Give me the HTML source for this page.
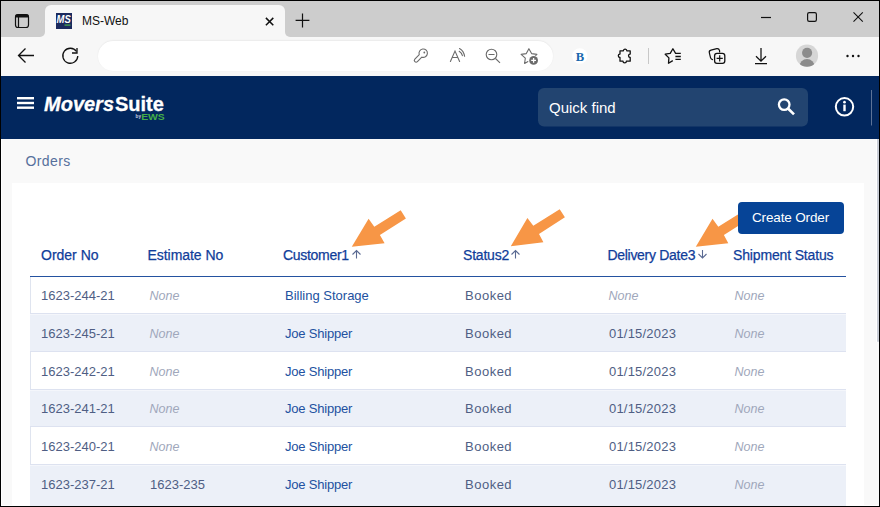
<!DOCTYPE html>
<html><head><meta charset="utf-8">
<style>
*{box-sizing:border-box;margin:0;padding:0}
html,body{width:880px;height:507px;overflow:hidden;background:#000}
body{position:relative;font-family:"Liberation Sans",sans-serif}
.a{position:absolute;white-space:nowrap}
svg{position:absolute;overflow:visible}
.th{position:absolute;top:246.5px;font-size:14px;color:#103d9a;line-height:16px;-webkit-text-stroke:0.25px #103d9a}
.row{position:absolute;left:30px;width:816px;height:37.8px}
.sep{position:absolute;left:30px;width:816px;height:1px;background:#dde2f0}.lt{position:absolute;left:30px;width:816px;height:1px;background:#f4f6fb}.band{position:absolute;left:30px;width:816px;background:#ecf0f8}
.c{position:absolute;top:11px;font-size:13px;line-height:16px;color:#4f5e84}
.n{font-style:italic;color:#a0a7bb;font-size:12.5px;margin-left:-0.5px}
.l{color:#2251a0}
</style></head><body>
<div class="a" style="left:1px;top:1px;width:878px;height:505px;background:#f9f9f9;overflow:hidden">
  <!-- tab strip -->
  <div class="a" style="left:0;top:0;width:878px;height:40px;background:#f7f7f7"></div>
  <div class="a" style="left:0;top:0;width:44px;height:36px;background:#cdcdcd;border-bottom-right-radius:5px"></div>
  <div class="a" style="left:284px;top:0;width:594px;height:36px;background:#cdcdcd;border-bottom-left-radius:5px"></div>
  <div class="a" style="left:40px;top:0;width:250px;height:12px;background:#cdcdcd"></div>
  <div class="a" style="left:44px;top:4px;width:240px;height:40px;background:#f7f7f7;border-radius:6px 6px 0 0"></div>
  <!-- toolbar -->
  <div class="a" style="left:0;top:36px;width:878px;height:39px;background:#f7f7f7"></div>
  <div class="a" style="left:97px;top:40px;width:455px;height:30px;background:#fff;border-radius:15px;box-shadow:0 -0.5px 1.5px rgba(0,0,0,0.08)"></div>
  <!-- navy header -->
  <div class="a" style="left:0;top:75px;width:878px;height:63px;background:#02275e"></div>
</div>

<!-- tab strip icons -->
<svg style="left:0;top:0" width="880" height="80">
  <!-- tab actions icon -->
  <rect x="15.5" y="14.5" width="13" height="13" rx="2.5" fill="none" stroke="#111" stroke-width="1.2"/>
  <rect x="15.5" y="14.5" width="13" height="3" rx="1" fill="#111"/>
  <line x1="18.5" y1="17" x2="18.5" y2="27.5" stroke="#111" stroke-width="1.2"/>
  <!-- favicon -->
  <rect x="56" y="13" width="16" height="16" fill="#1b2a5e"/>
  <text x="56.6" y="23.4" font-family="Liberation Sans" font-weight="bold" font-style="italic" font-size="11.5" fill="#fff" textLength="14.2" lengthAdjust="spacingAndGlyphs">MS</text>
  <rect x="64.5" y="24.5" width="6" height="1.2" fill="#4caf50"/>
  <!-- close x -->
  <path d="M265.9 17.9 L273.3 25.3 M273.3 17.9 L265.9 25.3" stroke="#111" stroke-width="1.5"/>
  <!-- plus -->
  <path d="M302.5 13.6 V27.5 M295.6 20.3 H309.4" stroke="#111" stroke-width="1.2"/>
  <!-- window controls -->
  <path d="M761 17.5 H771" stroke="#111" stroke-width="1.2"/>
  <rect x="807.6" y="12.6" width="8.8" height="8.8" rx="1.6" fill="none" stroke="#111" stroke-width="1.2"/>
  <path d="M853.5 12.3 L862.8 21.6 M862.8 12.3 L853.5 21.6" stroke="#111" stroke-width="1.1"/>
  <!-- back -->
  <path d="M18.5 55.5 H34 M25.5 48.5 L18.5 55.5 L25.5 62.5" fill="none" stroke="#111" stroke-width="1.3"/>
  <!-- refresh -->
  <path d="M76.5 51.5 A7.5 7.5 0 1 0 77.8 56" fill="none" stroke="#111" stroke-width="1.3"/>
  <path d="M77 48 V53 H72" fill="none" stroke="#111" stroke-width="1.3"/>
  <!-- key -->
  <path d="M421.8 57.15 A4.2 4.2 0 1 0 419.25 54.6 L414.85 59.05 A1.8 1.8 0 0 0 417.4 61.6 Z" fill="none" stroke="#6b6b6b" stroke-width="1.1" stroke-linejoin="round"/>
  <circle cx="424.3" cy="52.5" r="0.9" fill="#6b6b6b"/>
  <!-- read aloud -->
  <g fill="none" stroke="#6b6b6b" stroke-width="1.1" stroke-linecap="round">
    <path d="M450.4 61.5 L455 51 L459.6 61.5 M452.1 57.5 H457.9"/>
    <path d="M459.2 51.3 Q461.8 53 462.4 55.6"/>
    <path d="M459.5 48.5 Q463.8 51 464.6 56.3"/>
  </g>
  <!-- zoom out -->
  <g fill="none" stroke="#6b6b6b" stroke-width="1.1">
    <circle cx="491.5" cy="54.5" r="5.3"/>
    <path d="M495.5 58.5 L500 62.8 M488.5 54.5 H494.5"/>
  </g>
  <!-- star add -->
  <path d="M528.4 61.3 L524.6 63.4 L525.3 58.2 L521.1 54.4 L526.3 53.6 L528.9 48.7 L531.6 53.6 L536.9 54.4 L533 58.2" fill="none" stroke="#6b6b6b" stroke-width="1.1" stroke-linejoin="round"/>
  <circle cx="533.6" cy="60.4" r="5.2" fill="#fff"/>
  <circle cx="533.6" cy="60.4" r="4.4" fill="#6b6b6b"/>
  <path d="M533.6 58 V62.8 M531.2 60.4 H536" stroke="#fff" stroke-width="1.3"/>
  <!-- B -->
  <circle cx="579.8" cy="56" r="7.7" fill="#fff"/>
  <text x="575.8" y="60.6" font-family="Liberation Serif" font-weight="bold" font-size="13" fill="#1a68ad" textLength="8.4" lengthAdjust="spacingAndGlyphs">B</text>
  <!-- puzzle -->
  <path d="M620 50.8 H623.4 A1.7 1.7 0 1 1 626.8 50.8 H630.2 V54.1 A1.7 1.7 0 1 0 630.2 57.5 V61.2 H626.4 A1.7 1.7 0 1 1 623 61.2 H620 V57.5 A1.7 1.7 0 1 1 620 54.1 Z" fill="none" stroke="#111" stroke-width="1.3" stroke-linejoin="round"/>
  <!-- separator -->
  <path d="M648.5 48 V64" stroke="#c8c8c8" stroke-width="1"/>
  <!-- favorites -->
  <path d="M672.8 60.6 L668.5 63.2 L668.9 57.9 L665.2 54.2 L670.2 53.4 L672.9 48.7 L675.6 53.4 H680.8" fill="none" stroke="#111" stroke-width="1.3" stroke-linejoin="round"/>
  <path d="M675.4 56.5 H680.8 M675.4 59.4 H680.8" stroke="#111" stroke-width="1.3"/>
  <!-- collections -->
  <path d="M712.5 59.6 Q710.9 59.2 710.5 57.6 L709.3 52.6 Q708.9 50.6 711 50.1 L716.8 48.6 Q718.9 48.2 719.6 50.6 V52" fill="none" stroke="#111" stroke-width="1.2" stroke-linecap="round"/>
  <rect x="714.6" y="53.4" width="10.2" height="10" rx="2.4" fill="#f7f7f7" stroke="#111" stroke-width="1.3"/>
  <path d="M719.7 55.3 V61.5 M716.6 58.4 H722.8" stroke="#111" stroke-width="1.2"/>
  <!-- download -->
  <path d="M761 48 V61 M756 56.2 L761 61.2 L766 56.2 M755 63.6 H767" fill="none" stroke="#111" stroke-width="1.25"/>
  <!-- profile -->
  <clipPath id="pc"><circle cx="807" cy="55.7" r="11.1"/></clipPath>
  <circle cx="807" cy="55.7" r="11.1" fill="#d6d6d6"/>
  <circle cx="807.1" cy="52.8" r="5.1" fill="#8c8c8c"/>
  <ellipse cx="807" cy="66.5" rx="7.6" ry="7.6" fill="#8c8c8c" clip-path="url(#pc)"/>
  <!-- more -->
  <circle cx="847.5" cy="56" r="1.2" fill="#111"/>
  <circle cx="853" cy="56" r="1.2" fill="#111"/>
  <circle cx="858.5" cy="56" r="1.2" fill="#111"/>
</svg>
<div class="a" style="left:82px;top:14px;font-size:12px;line-height:14px;color:#111">MS-Web</div>

<!-- header -->
<svg style="left:0;top:0" width="880" height="140">
  <rect x="17" y="97" width="17" height="2.4" fill="#fff"/>
  <rect x="17" y="101.8" width="17" height="2.4" fill="#fff"/>
  <rect x="17" y="106.5" width="17" height="2.4" fill="#fff"/>
  <text x="44" y="110.8" font-family="Liberation Sans" font-weight="bold" font-style="italic" font-size="20" fill="#fff" stroke="#fff" stroke-width="0.3">Movers</text>
  <text x="115" y="110.8" font-family="Liberation Sans" font-weight="bold" font-size="20" fill="#fff" stroke="#fff" stroke-width="0.3">Suite</text>
  <text x="135.6" y="117.8" font-family="Liberation Sans" font-weight="bold" font-size="4.6" fill="#c8d0e0">by</text>
  <text x="141.2" y="119.9" font-family="Liberation Sans" font-weight="bold" font-size="8.4" fill="#44ae48" textLength="23.6" lengthAdjust="spacingAndGlyphs">EWS</text>
  <rect x="538" y="88" width="270" height="38.5" rx="6" fill="#224470"/>
  <g fill="none" stroke="#fff">
    <circle cx="784.2" cy="104.6" r="5.3" stroke-width="2.3"/>
    <path d="M788 108.5 L794 114.4" stroke-width="2.6"/>
    <circle cx="844.5" cy="106.8" r="8.7" stroke-width="2"/>
  </g>
  <circle cx="844.5" cy="102.2" r="1.35" fill="#fff"/>
  <rect x="843.3" y="104.6" width="2.4" height="6.6" fill="#fff"/>
  <path d="M871.5 90 V125.5" stroke="#5d7398" stroke-width="1"/>
</svg>
<div class="a" style="left:549px;top:99px;font-size:15px;line-height:17px;color:#fff">Quick find</div>

<!-- page -->
<div class="a" style="left:25.5px;top:153px;font-size:14px;line-height:16px;color:#56709c;letter-spacing:0.4px">Orders</div>
<div class="a" style="left:12px;top:183px;width:852px;height:330px;background:#fff"></div>
<!-- scrollbar area -->
<div class="a" style="left:864px;top:139px;width:15px;height:367px;background:#f9f9f9"></div>
<div class="a" style="left:876px;top:139px;width:1px;height:203px;background:#fff"></div>
<div class="a" style="left:877px;top:139px;width:2px;height:203px;background:#c9cdd6;border-radius:0 0 1px 1px"></div>
<div class="a" style="left:1px;top:139px;width:1px;height:367px;background:#fff"></div>
<div class="a" style="left:1px;top:505px;width:877px;height:1px;background:#fff"></div>

<!-- table -->
<div class="th" style="left:41px">Order No</div>
<div class="th" style="left:147.5px;letter-spacing:-0.05px">Estimate No</div>
<div class="th" style="left:283px;letter-spacing:-0.3px">Customer1</div>
<div class="th" style="left:463px;letter-spacing:-0.2px">Status2</div>
<div class="th" style="left:607.5px;letter-spacing:-0.3px">Delivery Date3</div>
<div class="th" style="left:733px;letter-spacing:-0.15px">Shipment Status</div>
<svg style="left:0;top:0" width="880" height="300">
  <g fill="none" stroke="#5a6a92" stroke-width="1.1">
    <path d="M356.5 250.5 V258.5 M352.5 254.5 L356.5 250.5 L360.5 254.5"/>
    <path d="M515.5 250.5 V258.5 M511.5 254.5 L515.5 250.5 L519.5 254.5"/>
    <path d="M702.5 250 V258 M698.5 254 L702.5 258 L706.5 254"/>
  </g>
</svg>
<div class="a" style="left:30px;top:276px;width:816px;height:1px;background:#2452a0"></div>

<div class="a" style="left:30px;top:277px;width:1px;height:229px;background:#dfe4ef"></div>
<div class="sep" style="top:313px"></div>
<div class="lt" style="top:314px"></div>
<div class="band" style="top:315px;height:36px"></div>
<div class="sep" style="top:351px"></div>
<div class="sep" style="top:389px"></div>
<div class="lt" style="top:390px"></div>
<div class="band" style="top:391px;height:35px"></div>
<div class="sep" style="top:426px"></div>
<div class="sep" style="top:464px"></div>
<div class="lt" style="top:465px"></div>
<div class="band" style="top:466px;height:40px"></div>
<div class="row" style="top:277.0px">
  <div class="c" style="left:11px">1623-244-21</div>
  <div class="c n" style="left:120px">None</div>
  <div class="c l" style="left:255px">Billing Storage</div>
  <div class="c" style="left:435px;letter-spacing:0.5px">Booked</div>
  <div class="c n" style="left:579px">None</div>
  <div class="c n" style="left:705px">None</div>
</div>
<div class="row b" style="top:314.8px">
  <div class="c" style="left:11px">1623-245-21</div>
  <div class="c n" style="left:120px">None</div>
  <div class="c l" style="left:255px;letter-spacing:-0.2px">Joe Shipper</div>
  <div class="c" style="left:435px;letter-spacing:0.5px">Booked</div>
  <div class="c" style="left:579px;letter-spacing:0.2px">01/15/2023</div>
  <div class="c n" style="left:705px">None</div>
</div>
<div class="row" style="top:352.6px">
  <div class="c" style="left:11px">1623-242-21</div>
  <div class="c n" style="left:120px">None</div>
  <div class="c l" style="left:255px;letter-spacing:-0.2px">Joe Shipper</div>
  <div class="c" style="left:435px;letter-spacing:0.5px">Booked</div>
  <div class="c" style="left:579px;letter-spacing:0.2px">01/15/2023</div>
  <div class="c n" style="left:705px">None</div>
</div>
<div class="row b" style="top:390.4px">
  <div class="c" style="left:11px">1623-241-21</div>
  <div class="c n" style="left:120px">None</div>
  <div class="c l" style="left:255px;letter-spacing:-0.2px">Joe Shipper</div>
  <div class="c" style="left:435px;letter-spacing:0.5px">Booked</div>
  <div class="c" style="left:579px;letter-spacing:0.2px">01/15/2023</div>
  <div class="c n" style="left:705px">None</div>
</div>
<div class="row" style="top:428.2px">
  <div class="c" style="left:11px">1623-240-21</div>
  <div class="c n" style="left:120px">None</div>
  <div class="c l" style="left:255px;letter-spacing:-0.2px">Joe Shipper</div>
  <div class="c" style="left:435px;letter-spacing:0.5px">Booked</div>
  <div class="c" style="left:579px;letter-spacing:0.2px">01/15/2023</div>
  <div class="c n" style="left:705px">None</div>
</div>
<div class="row b" style="top:466.0px">
  <div class="c" style="left:11px">1623-237-21</div>
  <div class="c" style="left:120px">1623-235</div>
  <div class="c l" style="left:255px;letter-spacing:-0.2px">Joe Shipper</div>
  <div class="c" style="left:435px;letter-spacing:0.5px">Booked</div>
  <div class="c" style="left:579px;letter-spacing:0.2px">01/15/2023</div>
  <div class="c n" style="left:705px">None</div>
</div>

<!-- arrows -->
<svg style="left:0;top:0" width="880" height="300">
  <g fill="#f79646">
    <polygon points="400.7,210.2 405.9,218.4 379.9,235.1 384.6,243.2 351.8,246.8 368.6,218.8 374.3,226.7"/>
    <polygon points="559.7,209.3 564.9,217.2 539.0,234.1 543.4,242.2 510.8,246.2 527.4,217.9 533.3,225.7"/>
    <polygon points="744.7,210.2 749.9,218.4 723.9,235.1 728.3,243.2 695.8,246.8 712.5,218.8 718.3,226.7"/>
  </g>
</svg>
<!-- create order -->
<div class="a" style="left:738px;top:202px;width:106px;height:32px;background:#064497;border-radius:4px"></div>
<div class="a" style="left:752px;top:210px;font-size:13.5px;line-height:16px;color:#fff;letter-spacing:-0.15px">Create Order</div>

<!-- frame borders -->
<div class="a" style="left:0;top:0;width:880px;height:1px;background:#000"></div>
<div class="a" style="left:0;top:0;width:1px;height:507px;background:#000"></div>
<div class="a" style="left:879px;top:0;width:1px;height:507px;background:#000"></div>
<div class="a" style="left:0;top:506px;width:880px;height:1px;background:#000"></div>
</body></html>
